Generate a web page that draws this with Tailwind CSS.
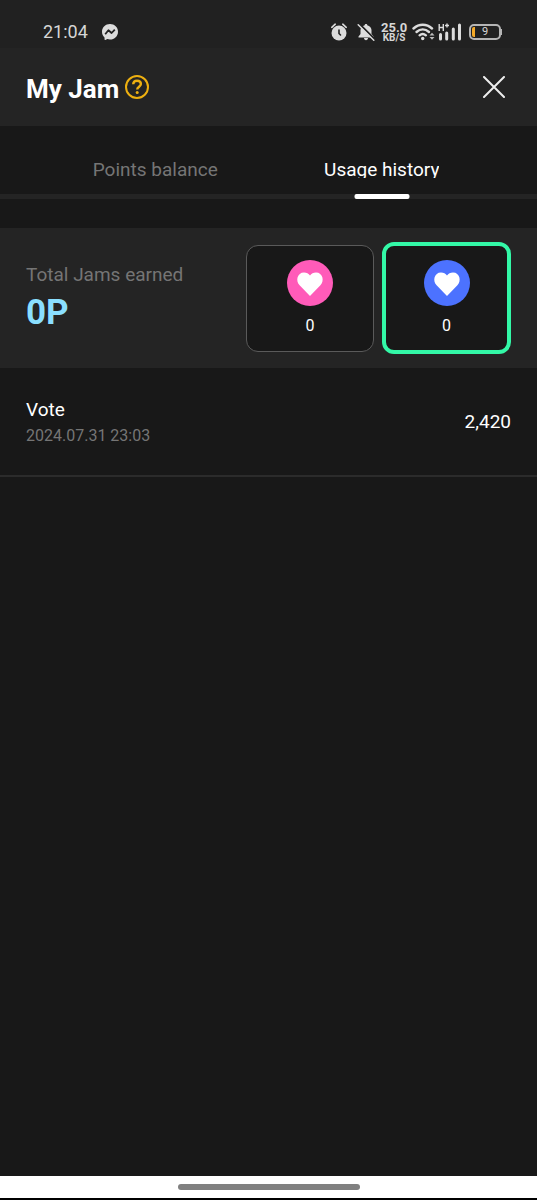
<!DOCTYPE html>
<html lang="en">
<head>
<meta charset="utf-8">
<meta name="viewport" content="width=device-width, initial-scale=1">
<title>My Jam</title>
<script src="https://cdn.jsdelivr.net/npm/@tailwindcss/browser@4"></script>
</head>
<body class="flex min-h-screen flex-col bg-[#181818] font-['Roboto',sans-serif] text-white">
  <!-- Status bar -->
  <div class="flex h-12 items-center justify-between bg-[#212121] pt-4 pr-[35px] pl-[43px] text-[#d6d6d6]">
    <div class="flex items-center gap-[14px]">
      <span class="text-lg leading-5">21:04</span>
      <svg class="size-4" viewBox="0 0 16 16" aria-hidden="true">
        <path fill="#dcdcdc" d="M8 0C3.500 0 0 3.300 0 7.700c0 2.300 1 4.300 2.500 5.700l.1 2c0 .4.400.7.800.5l1.900-.8c.9.200 1.800.400 2.700.4 4.500 0 8-3.300 8-7.800S12.500 0 8 0z"/>
        <path fill="none" stroke="#212121" stroke-width="1.800" stroke-linejoin="round" d="M3.200 10.200l3.200-4 3.200 2.800 3.200-3.400"/>
      </svg>
    </div>
    <div class="flex items-center">
      <svg class="h-[18px] w-4" viewBox="0 0 16 18" aria-hidden="true">
        <circle cx="8" cy="10" r="7.500" fill="#dcdcdc"/>
        <path d="M.8 4.300L4.200 1.200M15.200 4.300L11.800 1.200" stroke="#dcdcdc" stroke-width="1.600" stroke-linecap="round"/>
        <path d="M8 7v3.500l1.500 1.500" fill="none" stroke="#212121" stroke-width="1.600" stroke-linecap="round"/>
      </svg>
      <svg class="ml-[10px] h-[18px] w-[18px]" viewBox="0 0 18 18" aria-hidden="true">
        <path fill="#dcdcdc" d="M9 1c.8 0 1.300.5 1.300 1.200C12.600 2.800 14.500 4.700 14.500 7v4l2 2.500V14.500H1.500v-1L3.500 11V7c0-2.300 1.900-4.200 4.200-4.800C7.700 1.500 8.200 1 9 1zM7 15h4c0 1.300-.9 2.200-2 2.200s-2-.9-2-2.200z"/>
        <path d="M2.200.8l15 15" stroke="#212121" stroke-width="2"/>
        <path d="M1.200 1.800l15.600 15.500" stroke="#dcdcdc" stroke-width="1.500" stroke-linecap="round"/>
      </svg>
      <div class="ml-[6px] w-[26px] text-center font-bold">
        <div class="text-[13px] leading-[11px]">25.0</div>
        <div class="text-[10px] leading-[10px]">KB/S</div>
      </div>
      <svg class="ml-[5px] h-[18px] w-6" viewBox="0 0 24 18" aria-hidden="true">
        <g fill="none" stroke="#dcdcdc" stroke-width="2.400" stroke-linecap="round">
          <path d="M1.500 5.500c5.500-5 13-5 18.500 0"/><path d="M4.500 9c3.800-3.400 8.700-3.400 12.500 0"/><path d="M7.600 12.300c1.900-1.700 4.400-1.700 6.300 0"/>
        </g>
        <circle cx="10.700" cy="15.500" r="1.700" fill="#dcdcdc"/>
        <path fill="#bdbdbd" d="M17.500 12.500L20 9.800l2.500 2.700zM17.500 14L20 16.700l2.500-2.700z"/>
      </svg>
      <svg class="ml-[2px] h-[18px] w-6" viewBox="0 0 24 18" aria-hidden="true">
        <path d="M1.200 1v7M5.300 1v7M1.200 4.500h4.100M7 2.500h4M9 .5v4" stroke="#dcdcdc" stroke-width="1.400"/>
        <path d="M2.500 11.500V16M8.700 10v6M15.300 6v10M21.500 2v14" stroke="#dcdcdc" stroke-width="3" stroke-linecap="round"/>
      </svg>
      <div class="ml-[7px] flex h-4 w-8 items-center rounded-[5px] border-2 border-[#b5b5b5] pl-px">
        <span class="h-[10px] w-[3px] rounded-l-xs bg-[#f6aa28]"></span>
        <span class="grow pr-1 text-center text-[11px] leading-3">9</span>
      </div>
      <span class="h-[6px] w-px bg-[#b5b5b5]"></span>
    </div>
  </div>

  <header class="flex h-[78px] items-center justify-between bg-[#242424] px-[26px]">
    <div class="flex items-center gap-[6px]">
      <h1 class="pt-1 text-[26px] leading-8 font-bold">My Jam</h1>
      <button type="button" aria-label="Help" class="pb-px">
        <svg class="size-6" viewBox="0 0 24 24" fill="none" aria-hidden="true">
          <circle cx="12" cy="12" r="11" stroke="#eeb010" stroke-width="2"/>
          <path d="M8.200 9.300c.1-2.300 1.700-3.600 3.800-3.600 2.300 0 3.900 1.300 3.900 3.300 0 2.700-3.700 2.700-3.700 5.600" stroke="#eeb010" stroke-width="2.400"/>
          <circle cx="12.200" cy="17.600" r="1.500" fill="#eeb010"/>
        </svg>
      </button>
    </div>
    <button type="button" aria-label="Close" class="mr-[6px]">
      <svg class="size-[22px]" viewBox="0 0 22 22" aria-hidden="true"><path d="M1 1l20 20M21 1L1 21" stroke="#eee" stroke-width="2" stroke-linecap="round"/></svg>
    </button>
  </header>

  <nav class="flex h-[73px] border-b-[5px] border-[#242424] px-[42px] text-[19px]" role="tablist">
    <button type="button" role="tab" aria-selected="false" class="flex flex-1 justify-center pt-8 text-[#757575]">
      <span class="leading-6">Points balance</span>
    </button>
    <button type="button" role="tab" aria-selected="true" class="relative flex flex-1 justify-center pt-8">
      <span class="h-5 overflow-hidden leading-6">Usage history</span>
      <span class="absolute -bottom-[5px] left-1/2 h-[5px] w-[55px] -translate-x-1/2 rounded-xs bg-white"></span>
    </button>
  </nav>

  <main class="grow">
    <section class="mt-[29px] flex h-[140px] items-center justify-between bg-[#242424] px-[26px]">
      <div class="pt-[2px]">
        <p class="text-[19px] leading-6 text-[#757575]">Total Jams earned</p>
        <p class="mt-1 text-[35px] leading-11 font-bold text-[#8adfff]">0P</p>
      </div>
      <div class="flex items-center gap-2">
        <button type="button" aria-label="Pink hearts: 0" class="flex h-[107px] w-32 flex-col items-center justify-center rounded-xl border border-[#5a5a5a] bg-[#181818] pt-px">
          <svg class="size-[46px]" viewBox="0 0 46 46" aria-hidden="true"><circle cx="23" cy="23" r="23" fill="#ff5bb9"/><path fill="#fff" d="M23 36L12.600 25.300C8.300 20.800 10.200 12.400 17 12.400c2.700 0 4.600 1.200 6 3 1.400-1.800 3.300-3 6-3 6.800 0 8.700 8.400 4.400 12.900z"/></svg>
          <span class="mt-2 text-base leading-6">0</span>
        </button>
        <button type="button" aria-label="Blue hearts: 0" class="flex h-[112px] w-[129px] flex-col items-center justify-center rounded-xl border-4 border-[#33f8a7] bg-[#181818] pt-px">
          <svg class="size-[46px]" viewBox="0 0 46 46" aria-hidden="true"><circle cx="23" cy="23" r="23" fill="#4c72ff"/><path fill="#fff" d="M23 36L12.600 25.300C8.300 20.800 10.200 12.400 17 12.400c2.700 0 4.600 1.200 6 3 1.400-1.800 3.300-3 6-3 6.800 0 8.700 8.400 4.400 12.900z"/></svg>
          <span class="mt-2 text-base leading-6">0</span>
        </button>
      </div>
    </section>

    <ul>
      <li class="flex h-[109px] items-center justify-between border-b-2 border-[#2b2b2b] px-[26px]">
        <div>
          <p class="text-[19px] leading-6">Vote</p>
          <p class="mt-1 text-base leading-5 text-[#757575]">2024.07.31 23:03</p>
        </div>
        <p class="text-[19px] leading-6">2,420</p>
      </li>
    </ul>
  </main>

  <!-- Gesture bar -->
  <footer class="flex h-6 items-center justify-center border-b-2 border-black bg-white">
    <span class="h-[6px] w-[182px] rounded-full bg-[#808080]"></span>
  </footer>
</body>
</html>
